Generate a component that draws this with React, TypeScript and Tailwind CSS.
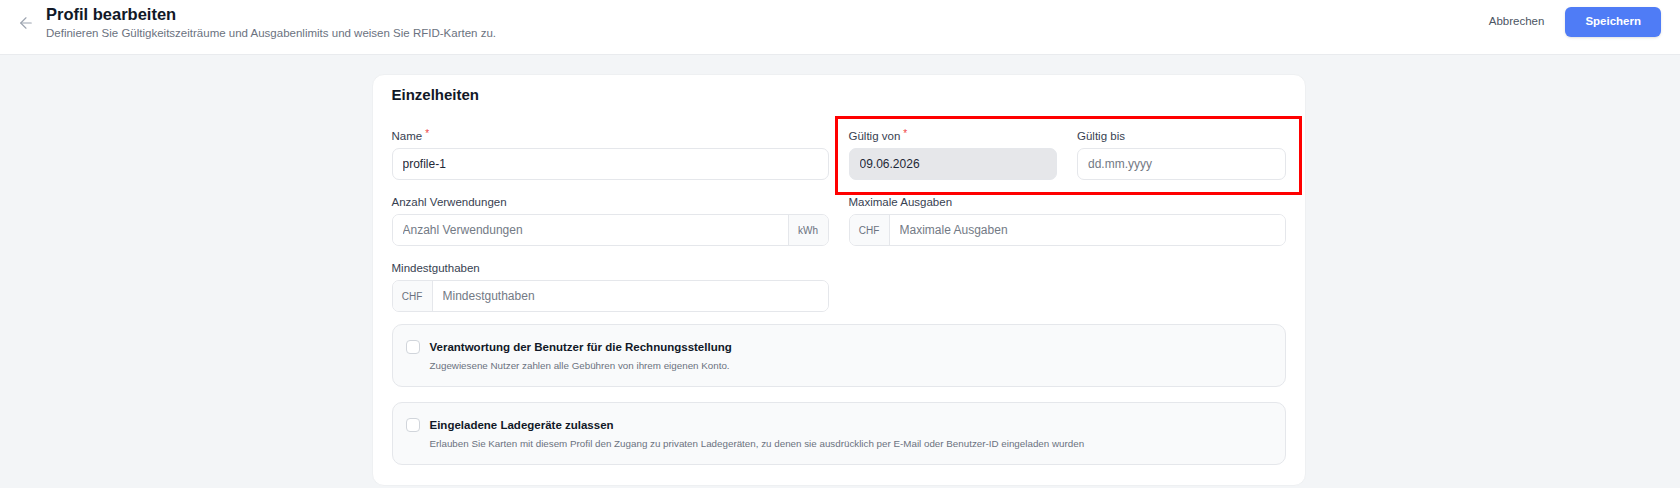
import React from "react";
import { ArrowLeft } from "lucide-react";

function Label({ text, required }: { text: string; required?: boolean }) {
  return (
    <div className="text-[11.5px] leading-[16px] text-[#374151] mb-[4px] flex items-start">
      <span>{text}</span>
      {required && <span className="ml-[3px] text-[10px] leading-[12px] text-[#ef4444]">*</span>}
    </div>
  );
}

function TextInput({ value, placeholder, disabled }: { value?: string; placeholder?: string; disabled?: boolean }) {
  return (
    <input
      readOnly
      defaultValue={value}
      placeholder={placeholder}
      className={
        "block w-full h-[32px] rounded-[7px] border border-[#e5e7eb] px-[10px] text-[12px] text-[#1f2937] placeholder:text-[#737a85] outline-none " +
        (disabled ? "bg-[#e6e7ea]" : "bg-white")
      }
    />
  );
}

function AddonInput({ placeholder, addon, side }: { placeholder: string; addon: string; side: "left" | "right" }) {
  const addonEl = (
    <div
      className={
        "w-[40px] shrink-0 flex items-center justify-center bg-[#f9fafb] text-[10px] text-[#6b7280] " +
        (side === "left" ? "border-r border-[#e5e7eb]" : "border-l border-[#e5e7eb]")
      }
    >
      {addon}
    </div>
  );
  return (
    <div className="flex h-[32px] w-full rounded-[7px] border border-[#e5e7eb] bg-white overflow-hidden">
      {side === "left" && addonEl}
      <input
        readOnly
        placeholder={placeholder}
        className="flex-1 min-w-0 px-[10px] text-[12px] text-[#1f2937] placeholder:text-[#737a85] outline-none bg-white"
      />
      {side === "right" && addonEl}
    </div>
  );
}

function CheckBlock({ title, desc }: { title: string; desc: string }) {
  return (
    <div className="rounded-[10px] border border-[#e5e7eb] bg-[#f9fafb] pl-[13px] pr-4 pt-[14px] pb-[13px] flex items-start gap-[10px]">
      <div className="mt-[1px] w-[14px] h-[14px] rounded-[4px] border border-[#d1d5db] bg-white shrink-0" />
      <div>
        <div className="text-[11.5px] leading-[16px] font-bold text-[#111827]">{title}</div>
        <div className="mt-[4px] text-[9.8px] leading-[14px] text-[#6b7280]">{desc}</div>
      </div>
    </div>
  );
}

export default function App() {
  return (
    <div className="min-h-screen bg-[#f3f5f7] font-['Liberation_Sans',Arial,Helvetica,sans-serif]">
      <header className="h-[55px] bg-white border-b border-[#e9ebee] flex items-start justify-between pl-[17px] pr-[19px]">
        <div className="flex items-start">
          <ArrowLeft className="mt-[14px] w-[18px] h-[18px] text-[#9ca3af]" strokeWidth={1.5} />
          <div className="ml-[11px] pt-[3px]">
            <h1 className="text-[16.5px] leading-[22px] font-bold text-[#111827]">Profil bearbeiten</h1>
            <p className="text-[11.5px] leading-[16px] text-[#6b7280]">
              Definieren Sie Gültigkeitszeiträume und Ausgabenlimits und weisen Sie RFID-Karten zu.
            </p>
          </div>
        </div>
        <div className="flex items-center gap-[21px] pt-[7px]">
          <button className="text-[11.5px] text-[#4b5563]">Abbrechen</button>
          <button className="h-[30px] px-[20px] rounded-[6px] bg-[#4f7cf6] text-white font-bold text-[11.5px] shadow-sm">
            Speichern
          </button>
        </div>
      </header>

      <main className="pt-[19px] pb-6 flex justify-center pr-[3px]">
        <div className="w-[934px] bg-white rounded-[12px] border border-[#eef0f2] px-[19px] pt-[10px] pb-[20px]">
          <h2 className="text-[15px] leading-[20px] font-bold text-[#111827]">Einzelheiten</h2>

          <div className="mt-[23px] grid grid-cols-2 gap-x-[20px] gap-y-[14px]">
            <div>
              <Label text="Name" required />
              <TextInput value="profile-1" />
            </div>
            <div className="relative grid grid-cols-2 gap-x-[20px]">
              <div>
                <Label text="Gültig von" required />
                <TextInput value="09.06.2026" disabled />
              </div>
              <div>
                <Label text="Gültig bis" />
                <TextInput placeholder="dd.mm.yyyy" />
              </div>
              <div className="absolute -left-[14px] -top-[12px] -right-[16px] -bottom-[15px] border-[3px] border-[#ff0000] pointer-events-none" />
            </div>

            <div>
              <Label text="Anzahl Verwendungen" />
              <AddonInput placeholder="Anzahl Verwendungen" addon="kWh" side="right" />
            </div>
            <div>
              <Label text="Maximale Ausgaben" />
              <AddonInput placeholder="Maximale Ausgaben" addon="CHF" side="left" />
            </div>

            <div>
              <Label text="Mindestguthaben" />
              <AddonInput placeholder="Mindestguthaben" addon="CHF" side="left" />
            </div>
            <div />
          </div>

          <div className="mt-[12px] flex flex-col gap-[15px]">
            <CheckBlock
              title="Verantwortung der Benutzer für die Rechnungsstellung"
              desc="Zugewiesene Nutzer zahlen alle Gebühren von ihrem eigenen Konto."
            />
            <CheckBlock
              title="Eingeladene Ladegeräte zulassen"
              desc="Erlauben Sie Karten mit diesem Profil den Zugang zu privaten Ladegeräten, zu denen sie ausdrücklich per E-Mail oder Benutzer-ID eingeladen wurden"
            />
          </div>
        </div>
      </main>
    </div>
  );
}
